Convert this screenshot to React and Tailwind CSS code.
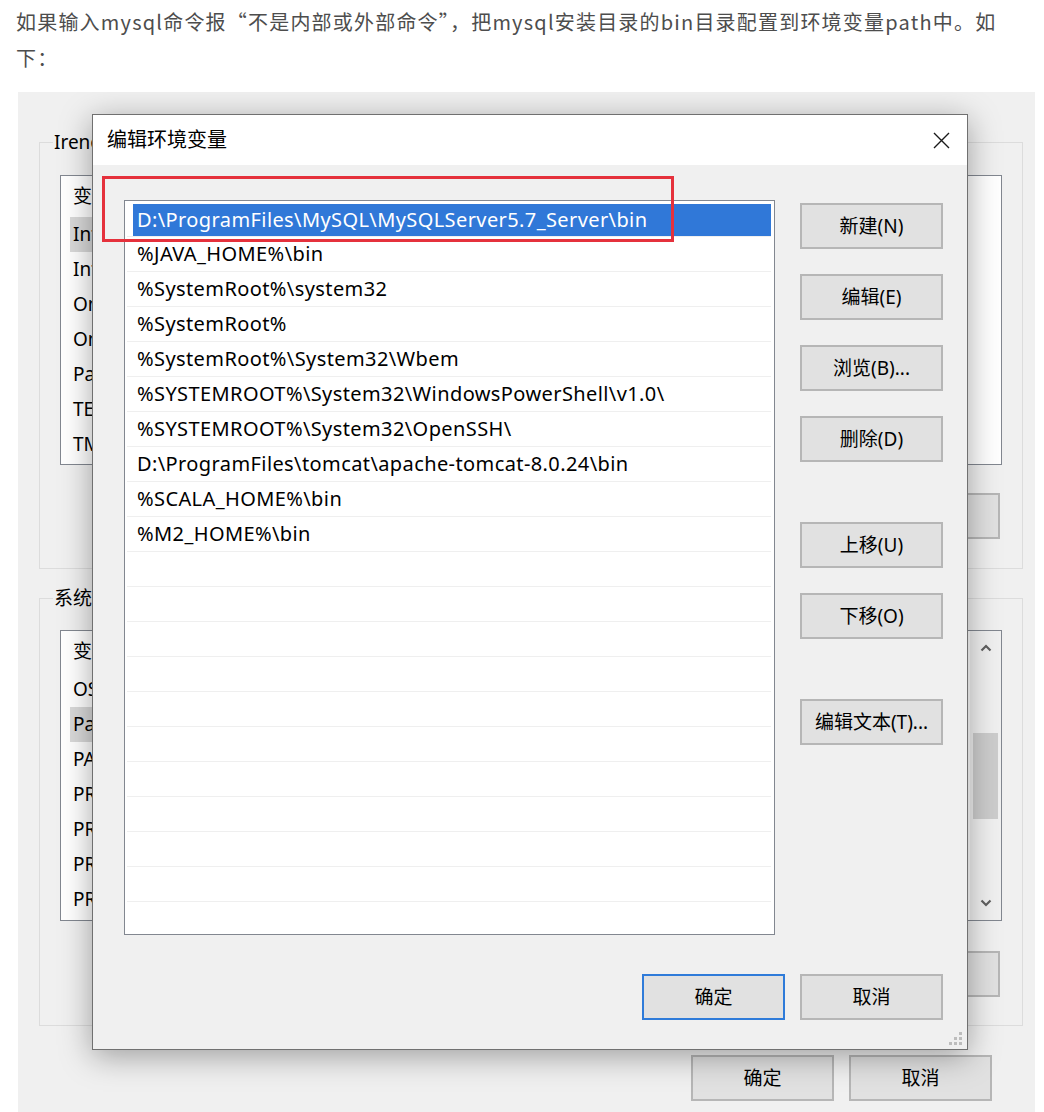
import clsx from 'clsx';

const ui = "font-['Noto_Sans','Noto_Sans_CJK_SC',sans-serif]";

const paths = [
  'D:\\ProgramFiles\\MySQL\\MySQLServer5.7_Server\\bin',
  '%JAVA_HOME%\\bin',
  '%SystemRoot%\\system32',
  '%SystemRoot%',
  '%SystemRoot%\\System32\\Wbem',
  '%SYSTEMROOT%\\System32\\WindowsPowerShell\\v1.0\\',
  '%SYSTEMROOT%\\System32\\OpenSSH\\',
  'D:\\ProgramFiles\\tomcat\\apache-tomcat-8.0.24\\bin',
  '%SCALA_HOME%\\bin',
  '%M2_HOME%\\bin',
];

// background window is mostly hidden by the dialog, only the left edge of each name shows
const userVars = ['IntelliJ IDEA', 'IntelliJ IDEA Community Edition', 'OneDrive', 'OneDriveConsumer', 'Path', 'TEMP', 'TMP'];
const sysVars = ['OS', 'Path', 'PATHEXT', 'PROCESSOR_ARCHITECTURE', 'PROCESSOR_IDENTIFIER', 'PROCESSOR_LEVEL', 'PROCESSOR_REVISION'];

const WinButton = ({ children, focused, className = '', label }) => (
  <button
    aria-label={label}
    className={clsx(
      'h-[46px] w-[143px] shrink-0 bg-[#e1e1e1] text-[19px] text-black flex items-center justify-center',
      focused ? 'border-2 border-[#2f7bd9]' : 'border-2 border-[#b6b6b6]',
      className
    )}
  >
    {children}
  </button>
);

const Chevron = ({ down }) => (
  <svg width="12" height="8" viewBox="0 0 12 8" className={down ? 'rotate-180' : ''}>
    <polyline points="1.5,6.5 6,2 10.5,6.5" fill="none" stroke="#606060" strokeWidth="2.2" />
  </svg>
);

const BackList = ({ rows, selected, height, scroll }) => (
  <div className="relative bg-white border border-[#828790] overflow-hidden" style={{ height }}>
    <div className="h-[41px] flex items-center pl-[12px]">
      <span className="w-[20px] overflow-hidden whitespace-nowrap">变量</span>
    </div>
    {rows.map((r, i) => (
      <div key={r} className="h-[35px] flex items-center">
        <div
          className={clsx(
            'h-[35px] w-[22px] ml-[9px] pl-[3px] flex items-center overflow-hidden whitespace-nowrap',
            i === selected && 'bg-[#d9d9d9]'
          )}
        >
          {r}
        </div>
      </div>
    ))}
    {scroll && (
      <div className="absolute right-0 top-0 bottom-0 w-[31px] bg-[#f0f0f0] flex flex-col items-center">
        <div className="h-[34px] flex items-center justify-center">
          <Chevron />
        </div>
        <div className="mt-[68px] h-[86px] w-[25px] bg-[#cdcdcd]" />
        <div className="mt-auto h-[34px] flex items-center justify-center">
          <Chevron down />
        </div>
      </div>
    )}
  </div>
);

const Grip = () => (
  <svg width="14" height="14" viewBox="0 0 14 14" className="absolute right-[4px] bottom-[3px]">
    {[
      [10, 0],
      [5, 5],
      [10, 5],
      [0, 10],
      [5, 10],
      [10, 10],
    ].map(([x, y]) => (
      <rect key={`${x}-${y}`} x={x} y={y} width="3" height="3" fill="#bdbdbd" />
    ))}
  </svg>
);

const EditDialog = () => (
  <div className="absolute left-[74px] top-[22px] w-[876px] h-[936px] border border-[#707070] bg-[#f0f0f0] flex flex-col shadow-[0_6px_30px_rgba(0,0,0,0.35)]">
    <div className="h-[50px] bg-white flex items-center justify-between pl-[14px] pr-[17px]">
      <span className="text-[20px] text-black">编辑环境变量</span>
      <svg width="17" height="17" viewBox="0 0 17 17">
        <path d="M1 1 L16 16 M16 1 L1 16" stroke="#1a1a1a" strokeWidth="1.4" />
      </svg>
    </div>

    <div className="flex pt-[35px] pl-[31px]">
      <div className="w-[651px] h-[735px] bg-white border border-[#828790] overflow-hidden pt-[1px] text-[20px] tracking-[0.4px] text-black">
        {Array.from({ length: 21 }).map((_, i) => (
          <div key={i} className="h-[35px] ml-[2px] mr-[3px] border-b border-[#efefef] flex">
            {i === 0 ? (
              <div className="mt-[2px] ml-[6px] h-[32px] flex-1 bg-[#3078d8] text-white flex items-center pl-[4px] whitespace-nowrap">
                {paths[0]}
              </div>
            ) : (
              <div className="flex items-center pl-[10px] whitespace-nowrap">{paths[i] || ''}</div>
            )}
          </div>
        ))}
      </div>

      <div className="ml-[25px] pt-[3px] flex flex-col">
        <WinButton>新建(N)</WinButton>
        <WinButton className="mt-[25px]">编辑(E)</WinButton>
        <WinButton className="mt-[25px]">浏览(B)...</WinButton>
        <WinButton className="mt-[25px]">删除(D)</WinButton>
        <WinButton className="mt-[60px]">上移(U)</WinButton>
        <WinButton className="mt-[25px]">下移(O)</WinButton>
        <WinButton className="mt-[60px]">编辑文本(T)...</WinButton>
      </div>
    </div>

    <div className="mt-[39px] flex justify-end gap-[15px] pr-[24px]">
      <WinButton focused>确定</WinButton>
      <WinButton>取消</WinButton>
    </div>

    <div className="absolute left-[9px] top-[61px] w-[572px] h-[66px] border-[3px] border-[#e5313c]" />
    <Grip />
  </div>
);

const App = () => {
  return (
    <div className={clsx('min-h-screen w-[1044px] bg-white', ui)}>
      <p className="pl-[16px] pt-[4px] text-[20px] leading-[36px] tracking-[1.2px] text-[#4d4d4d] font-['Noto_Sans_CJK_SC',sans-serif]">
        如果输入mysql命令报“不是内部或外部命令”，把mysql安装目录的bin目录配置到环境变量path中。如
        <br />
        下：
      </p>

      <div className="relative mt-[16px] ml-[18px] w-[1017px] h-[1020px] bg-[#f0f0f0] overflow-hidden text-[19px] text-black">
        <div className="pt-[36px] pl-[21px] w-[1005px]">
          <fieldset className="border border-[#dcdcdc] px-[20px] pb-[29px]">
            <legend className="-ml-[7px] px-[1px] leading-[28px] text-[19px]">
              <span className="block w-[38px] overflow-hidden whitespace-nowrap">Irene 的用户变量(U)</span>
            </legend>
            <div className="mt-[19px]">
              <BackList rows={userVars} selected={0} height={290} />
            </div>
            <div className="mt-[28px] pr-[2px] flex justify-end gap-[15px]">
              <WinButton label="新建(N)..." />
              <WinButton label="编辑(E)..." />
              <WinButton label="删除(D)" />
            </div>
          </fieldset>

          <fieldset className="mt-[15px] border border-[#dcdcdc] px-[20px] pb-[28px]">
            <legend className="-ml-[7px] px-[1px] leading-[28px] text-[19px]">
              <span className="block w-[38px] overflow-hidden whitespace-nowrap">系统变量(S)</span>
            </legend>
            <div className="mt-[18px]">
              <BackList rows={sysVars} selected={1} height={291} scroll />
            </div>
            <div className="mt-[30px] pr-[2px] flex justify-end gap-[15px]">
              <WinButton className="h-[45px]" label="新建(W)..." />
              <WinButton className="h-[45px]" label="编辑(I)..." />
              <WinButton className="h-[45px]" label="删除(L)" />
            </div>
          </fieldset>

          <div className="mt-[29px] pr-[31px] flex justify-end gap-[15px]">
            <WinButton className="w-[142px]">确定</WinButton>
            <WinButton className="w-[142px]">取消</WinButton>
          </div>
        </div>

        <EditDialog />
      </div>
    </div>
  );
};

export default App;
